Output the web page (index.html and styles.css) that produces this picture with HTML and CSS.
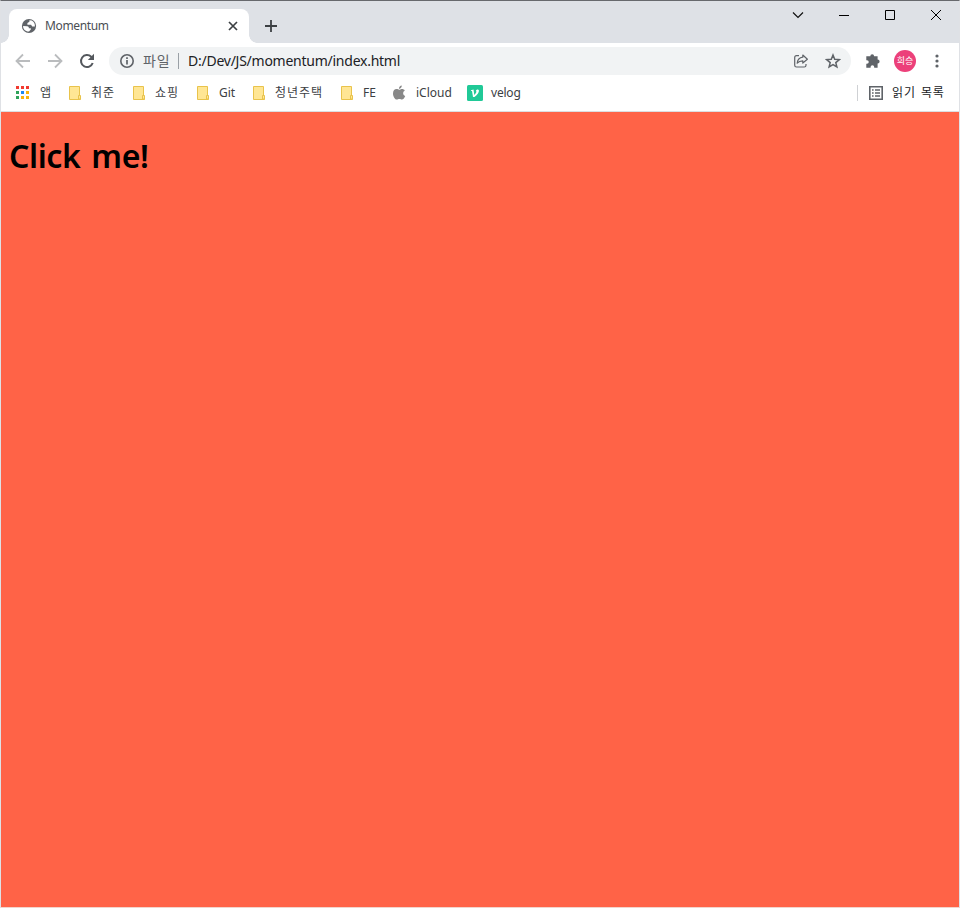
FILE: index.html
```html
<!DOCTYPE html>
<html lang="ko">
<head>
<meta charset="utf-8">
<title>Momentum</title>
<link rel="stylesheet" href="styles.css">
</head>
<body>
<svg class="defs" width="0" height="0">
  <symbol id="folder" viewBox="0 0 16 16"><path d="M2.5 1.5h10v10h1v3h-11z" fill="#ffe694" stroke="#e9c34b"/><path d="M11.5 14v-3.5h2V14z" fill="#ffe694" stroke="#e9c34b"/></symbol>
</svg>
<div class="window">
  <header class="tabstrip">
    <div class="tab">
      <svg class="globe" width="16" height="16" viewBox="0 0 16 16"><circle cx="8" cy="8" r="7.1" fill="#5f6368"/><path d="M2.1 8.1 6 8.3c1.7.2 2 1 1.8 1.9h2v1.3L8 13.6c-3.4.3-6-2.2-5.9-5.5zM8.4 2.2v1.5L6.4 5v1.7h3.7l1.1 1.7h2.7c.3-2.6-1.2-5-3.2-5.8z" fill="#fff"/></svg>
      <span class="tab-title">Momentum</span>
      <svg class="close" width="10" height="10" viewBox="0 0 10 10"><path d="m1 1 8 8M9 1 1 9" stroke="#3c4043" stroke-width="1.7"/></svg>
    </div>
    <svg class="plus" width="12" height="12" viewBox="0 0 12 12"><path d="M6 0v12M0 6h12" stroke="#3c4043" stroke-width="1.8"/></svg>
    <div class="controls">
      <svg viewBox="0 0 12 12"><path d="m1 3.5 5 5 5-5" fill="none" stroke="#111" stroke-width="1.2"/></svg>
      <svg viewBox="0 0 12 12"><path d="M1 6.5h10" stroke="#000"/></svg>
      <svg viewBox="0 0 12 12"><path d="M1.5 1.5h9v9h-9z" fill="none" stroke="#000"/></svg>
      <svg viewBox="0 0 12 12"><path d="m1 1 10 10M11 1 1 11" stroke="#000"/></svg>
    </div>
  </header>
  <nav class="toolbar">
    <svg class="nav" viewBox="0 0 16 16"><path d="M15 8H2M8 1.5 1.5 8 8 14.5" fill="none" stroke="#babcbe" stroke-width="1.8"/></svg>
    <svg class="nav" viewBox="0 0 16 16"><path d="M1 8h13M8 1.5 14.5 8 8 14.5" fill="none" stroke="#babcbe" stroke-width="1.8"/></svg>
    <svg class="nav" viewBox="0 0 16 16"><path d="M13.7 10A6 6 0 1 1 12.2 3.7L13 4.6" fill="none" stroke="#54585d" stroke-width="2"/><path d="M15 .8V7H8.8z" fill="#54585d"/></svg>
    <div class="address">
      <svg class="info" viewBox="0 0 16 16"><circle cx="8" cy="8" r="6.2" fill="none" stroke="#5f6368" stroke-width="1.6"/><path d="M8 7v4.5M8 4.3v1.7" stroke="#5f6368" stroke-width="1.7"/></svg>
      <span class="scheme">파일</span><i class="sep"></i><span class="url">D:/Dev/JS/momentum/index.html</span>
      <svg class="share" viewBox="0 0 16 16"><path d="M6 2.7H3.5Q1.7 2.7 1.7 4.5v7.7q0 1.8 1.8 1.8h7.700q1.800 0 1.800-1.800V11" fill="none" stroke="#5f6368" stroke-width="1.2"/><path d="M9.800 2 14.400 6.200 9.800 10V7.800c-2.800 0-4.300.7-5.600 2.400.3-3.500 2.300-5.600 5.600-6z" fill="none" stroke="#5f6368" stroke-width="1.2" stroke-linejoin="round"/></svg>
      <svg class="star" viewBox="0 0 16 16"><path d="m8 2 1.700 4.200 4.600.4-3.500 3 1.100 4.400L8 11.600 4.100 14l1.100-4.400-3.500-3 4.600-.4z" fill="none" stroke="#5f6368" stroke-width="1.5"/></svg>
    </div>
    <svg class="puzzle" viewBox="0 0 16 16"><path d="M2 3.200h3.300a1.900 1.900 0 1 1 3.800 0H12.600v3.400a2 2 0 1 1 0 4V14.800H9.200v-.8a1.800 1.800 0 0 0-3.600 0v.8H1.300v-4.100H2a1.700 1.700 0 0 0 0-3.500h-.7V3.200z" fill="#5f6368"/></svg>
    <div class="avatar">희승</div>
    <svg class="more" viewBox="0 0 4 16"><circle cx="2" cy="3" r="1.6"/><circle cx="2" cy="8" r="1.6"/><circle cx="2" cy="13" r="1.6"/></svg>
  </nav>
  <nav class="bookmarks">
    <div class="bm apps"><svg viewBox="0 0 16 16"><g shape-rendering="crispEdges"><path d="M1 1h3v3H1zM6 1h3v3H6zM11 1h3v3h-3z" fill="#f13a30"/><path d="M1 6h3v3H1zM1 11h3v3H1z" fill="#2fa25a"/><path d="M6 6h3v3H6z" fill="#1e88f0"/><path d="M11 6h3v3h-3zM6 11h3v3H6zM11 11h3v3h-3z" fill="#fab20b"/></g></svg><span>앱</span></div>
    <div class="bm two"><svg><use href="#folder"/></svg><span>취준</span></div>
    <div class="bm two"><svg><use href="#folder"/></svg><span>쇼핑</span></div>
    <div class="bm git"><svg><use href="#folder"/></svg><span>Git</span></div>
    <div class="bm four"><svg><use href="#folder"/></svg><span>청년주택</span></div>
    <div class="bm fe"><svg><use href="#folder"/></svg><span>FE</span></div>
    <div class="bm cloud"><svg viewBox="0 0 16 16"><path d="M10.800 .6c.1 1.900-1.200 3.300-2.800 3.300C7.900 2.200 9.200 .8 10.800 .6zM8.200 4.800c.7 0 1.500-.8 2.800-.8 1.200 0 2.200.6 2.800 1.400-2.400 1.500-2 4.600.4 5.500-.6 1.800-1.900 3.700-3.300 3.700-.9 0-1.300-.5-2.500-.5s-1.600.5-2.500.5C4 14.600 2 11.400 2 8.400c0-2.800 1.700-4.300 3.400-4.300C6.700 4.100 7.500 4.800 8.200 4.800z" fill="#888"/></svg><span>iCloud</span></div>
    <div class="bm velog"><svg viewBox="0 0 16 16"><rect width="16" height="16" rx="1.500" fill="#20c997"/><path d="M4 5.200 6.500 4.400 7.300 10C9.400 7.800 9.800 6.700 9 5.700c0-1.200 2.400-2 2.900-.4.4 1.800-1.400 4.300-4.400 6.800H6L5 6.100l-1-.1z" fill="#fff"/></svg><span>velog</span></div>
    <div class="reading"><svg viewBox="0 0 16 16"><path d="M1.800 1.800h12.400v12.400H1.800z" fill="none" stroke="#5f6368" stroke-width="1.600"/><path d="M4 5h1.600M7 5h5M4 8h1.600M7 8h5M4 11h1.600M7 11h5" stroke="#5f6368" stroke-width="1.400"/></svg><span>읽기 목록</span></div>
  </nav>
  <main><h1>Click me!</h1></main>
</div>
</body>
</html>
```
FILE: styles.css
```css
* { box-sizing: border-box; }
body { margin: 0; font-family: "Noto Sans", "Noto Sans CJK KR", sans-serif; color: #3c4043; }
.defs { position: absolute; }
svg { display: block; flex: none; }
span { white-space: nowrap; padding-bottom: 1px; }
.window { height: 908px; display: flex; flex-direction: column; background: #fff; border: 1px solid #dfe1e5; border-top-color: #67696d; border-bottom-color: #f2d4cc; overflow: hidden; }
.tabstrip { height: 42px; flex: none; display: flex; background: #dee1e6; padding: 8px 0 0 8px; }
.tab { position: relative; width: 240px; height: 34px; border-radius: 8px 8px 0 0; background: #fff; display: flex; align-items: center; padding: 0 11px 0 12px; }
.tab::before, .tab::after { content: ""; position: absolute; bottom: 0; width: 8px; height: 8px; }
.tab::before { left: -8px; background: radial-gradient(circle at 0 0, #dee1e6 7.5px, #fff 8px); }
.tab::after { right: -8px; background: radial-gradient(circle at 100% 0, #dee1e6 7.5px, #fff 8px); }
.tab-title { margin-left: 8px; font-size: 12px; letter-spacing: -.35px; color: #4b4f54; }
.close { margin-left: auto; }
.plus { margin: 11px 0 0 16px; }
.controls { display: flex; gap: 34px; margin: 0 17px 0 auto; }
.controls svg { width: 12px; height: 12px; }
.toolbar { height: 36px; flex: none; display: flex; align-items: center; padding-left: 14px; }
.nav { width: 16px; height: 16px; margin-right: 16px; }
.address { width: 742px; height: 28px; margin-left: -2px; border-radius: 14px; background: #f1f3f4; display: flex; align-items: center; padding: 0 10px; }
.address svg { width: 16px; height: 16px; }
.scheme { width: 28px; margin-left: 8px; font-size: 14px; letter-spacing: .8px; color: #5f6368; padding-bottom: 2px; }
.sep { width: 1px; height: 16px; margin-left: 7px; background: #9aa0a6; }
.url { margin-left: 9px; font-size: 14px; letter-spacing: -.25px; color: #202124; padding-bottom: 2px; }
.address .share { margin-left: auto; }
.address .star { margin-left: 16px; }
.puzzle { width: 16px; height: 16px; margin-left: 14px; }
.avatar { width: 22px; height: 22px; margin-left: 13px; border-radius: 50%; background: #ec407a; color: #fff; font-size: 9px; line-height: 21px; text-align: center; }
.more { width: 4px; height: 16px; margin-left: 19px; fill: #5f6368; }
.bookmarks { height: 33px; flex: none; display: flex; align-items: center; padding: 0 0 5px 14px; border-bottom: 1px solid #dcdee1; font-size: 12px; }
.bm { display: flex; align-items: center; }
.bm svg { width: 16px; height: 16px; margin-right: 8px; }
.apps { width: 52px; }
.apps svg { margin-right: 9px; }
.two { width: 64px; }
.two span, .four span { letter-spacing: 1px; }
.git { width: 56px; }
.four { width: 88px; }
.fe { width: 52px; }
.cloud { width: 76px; }
.cloud svg { margin-right: 9px; }
.velog span { letter-spacing: -.2px; }
.reading { width: 102px; height: 16px; display: flex; align-items: center; margin-left: auto; padding-left: 10px; border-left: 1px solid #cfd1d4; color: #202124; }
.reading svg { width: 16px; height: 16px; margin-right: 8px; }
.reading span { letter-spacing: .9px; word-spacing: 1px; }
main { flex: 1; background: #ff6347; padding: 22px 8px; }
h1 { margin: 0; color: #000; font-size: 32px; line-height: 43px; font-weight: 600; letter-spacing: -.4px; word-spacing: 3px; }
```
